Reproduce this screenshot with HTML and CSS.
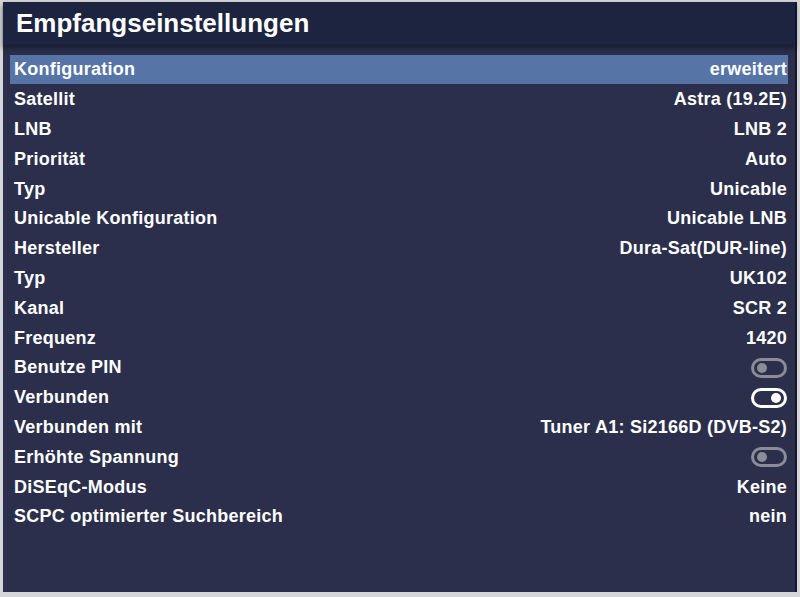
FILE: index.html
```html
<!DOCTYPE html>
<html lang="de">
    <head>
        <meta charset="UTF-8" />
        <title>Empfangseinstellungen</title>
        <link rel="stylesheet" href="styles.css">
    </head>
    <body>
        <div class="screen">
            <header class="title">Empfangseinstellungen</header>
            <ul class="list">
                <li class="row selected"><span>Konfiguration</span><span>erweitert</span></li>
                <li class="row"><span>Satellit</span><span>Astra (19.2E)</span></li>
                <li class="row"><span>LNB</span><span>LNB 2</span></li>
                <li class="row"><span>Priorität</span><span>Auto</span></li>
                <li class="row"><span>Typ</span><span>Unicable</span></li>
                <li class="row"><span>Unicable Konfiguration</span><span>Unicable LNB</span></li>
                <li class="row"><span>Hersteller</span><span>Dura-Sat(DUR-line)</span></li>
                <li class="row"><span>Typ</span><span>UK102</span></li>
                <li class="row"><span>Kanal</span><span>SCR 2</span></li>
                <li class="row"><span>Frequenz</span><span>1420</span></li>
                <li class="row"><span>Benutze PIN</span><span class="toggle"></span></li>
                <li class="row"><span>Verbunden</span><span class="toggle on"></span></li>
                <li class="row"><span>Verbunden mit</span><span>Tuner A1: Si2166D (DVB-S2)</span></li>
                <li class="row"><span>Erhöhte Spannung</span><span class="toggle"></span></li>
                <li class="row"><span>DiSEqC-Modus</span><span>Keine</span></li>
                <li class="row"><span>SCPC optimierter Suchbereich</span><span>nein</span></li>
            </ul>
        </div>
    </body>
</html>
```

FILE: styles.css
```css
* {
    margin: 0;
    padding: 0;
    box-sizing: border-box;
}
html, body {
    width: 800px;
    height: 597px;
    overflow: hidden;
}
body {
    background: #d4d6d9;
    padding: 2px 3px 5px 3px;
    font-family: "Liberation Sans", Arial, sans-serif;
    font-weight: bold;
    color: #fff;
}
.screen {
    height: 100%;
    background: #2b2f4b;
    border-right: 2px solid #15182a;
    display: flex;
    flex-direction: column;
}
.title {
    height: 43px;
    background: #1d2440;
    font-size: 26px;
    padding: 6px 0 0 13px;
    box-shadow: 0 3px 5px rgba(10, 12, 25, 0.6);
    position: relative;
}
.list {
    list-style: none;
    padding: 10px 7px 0 7px;
}
.row {
    height: 29.8px;
    display: flex;
    justify-content: space-between;
    align-items: center;
    font-size: 18px;
    letter-spacing: 0.25px;
    padding: 0 1px 0 4px;
}
.row.selected {
    background: #5674a6;
    height: 29px;
    margin-bottom: 0.8px;
}
.toggle {
    width: 36px;
    height: 20px;
    border: 3px solid #8a8c96;
    border-radius: 10px;
    position: relative;
}
.toggle::after {
    content: "";
    position: absolute;
    top: 2px;
    left: 3px;
    width: 10px;
    height: 10px;
    border-radius: 50%;
    background: #8a8c96;
}
.toggle.on {
    border-color: #fff;
}
.toggle.on::after {
    left: auto;
    right: 3px;
    background: #fff;
}
```
